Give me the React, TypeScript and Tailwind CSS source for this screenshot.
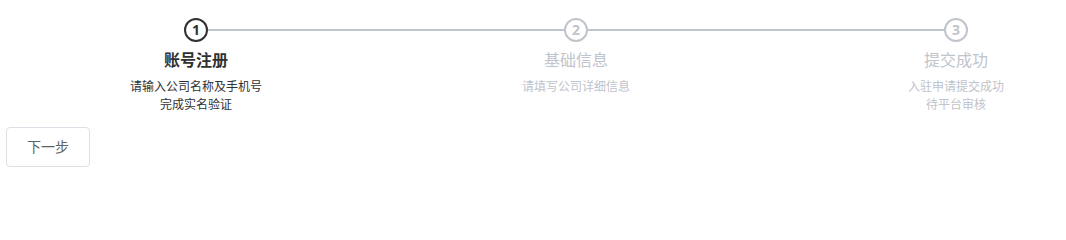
import React from 'react'

type Step = {
  num: number
  title: string
  lines: string[]
  active: boolean
}

const steps: Step[] = [
  { num: 1, title: '账号注册', lines: ['请输入公司名称及手机号', '完成实名验证'], active: true },
  { num: 2, title: '基础信息', lines: ['请填写公司详细信息'], active: false },
  { num: 3, title: '提交成功', lines: ['入驻申请提交成功', '待平台审核'], active: false },
]

function StepItem({ step, first, last }: { step: Step; first: boolean; last: boolean }) {
  const color = step.active ? 'text-[#303133]' : 'text-[#c0c4cc]'
  const border = step.active ? 'border-[#303133]' : 'border-[#c0c4cc]'
  return (
    <div className="flex w-[380px] shrink-0 flex-col items-center">
      {/* head */}
      <div className="flex h-6 w-full items-center">
        <div className={first ? 'h-[2px] flex-1' : 'h-[2px] flex-1 bg-[#c0c4cc]'} />
        <div
          className={`flex h-6 w-6 shrink-0 items-center justify-center rounded-full border-2 bg-white text-sm font-bold ${border} ${color}`}
        >
          {step.num}
        </div>
        <div className={last ? 'h-[2px] flex-1' : 'h-[2px] flex-1 bg-[#c0c4cc]'} />
      </div>
      {/* main */}
      <div className={`text-base leading-[36px] ${step.active ? 'font-bold' : ''} ${color}`}>{step.title}</div>
      <div className={`text-center text-xs leading-[18px] ${color}`}>
        {step.lines.map((l) => (
          <div key={l}>{l}</div>
        ))}
      </div>
    </div>
  )
}

export default function App() {
  return (
    <div
      className="h-[213px] w-full overflow-hidden bg-white pl-[6px] pt-[18px]"
      style={{ fontFamily: '"Noto Sans", "Noto Sans CJK SC", sans-serif' }}
    >
      <div className="flex w-[1140px]">
        {steps.map((s, i) => (
          <StepItem key={s.num} step={s} first={i === 0} last={i === steps.length - 1} />
        ))}
      </div>
      <button className="mt-[13px] rounded border border-[#dcdfe6] bg-white px-5 py-3 text-sm leading-none text-[#606266]">
        下一步
      </button>
    </div>
  )
}
